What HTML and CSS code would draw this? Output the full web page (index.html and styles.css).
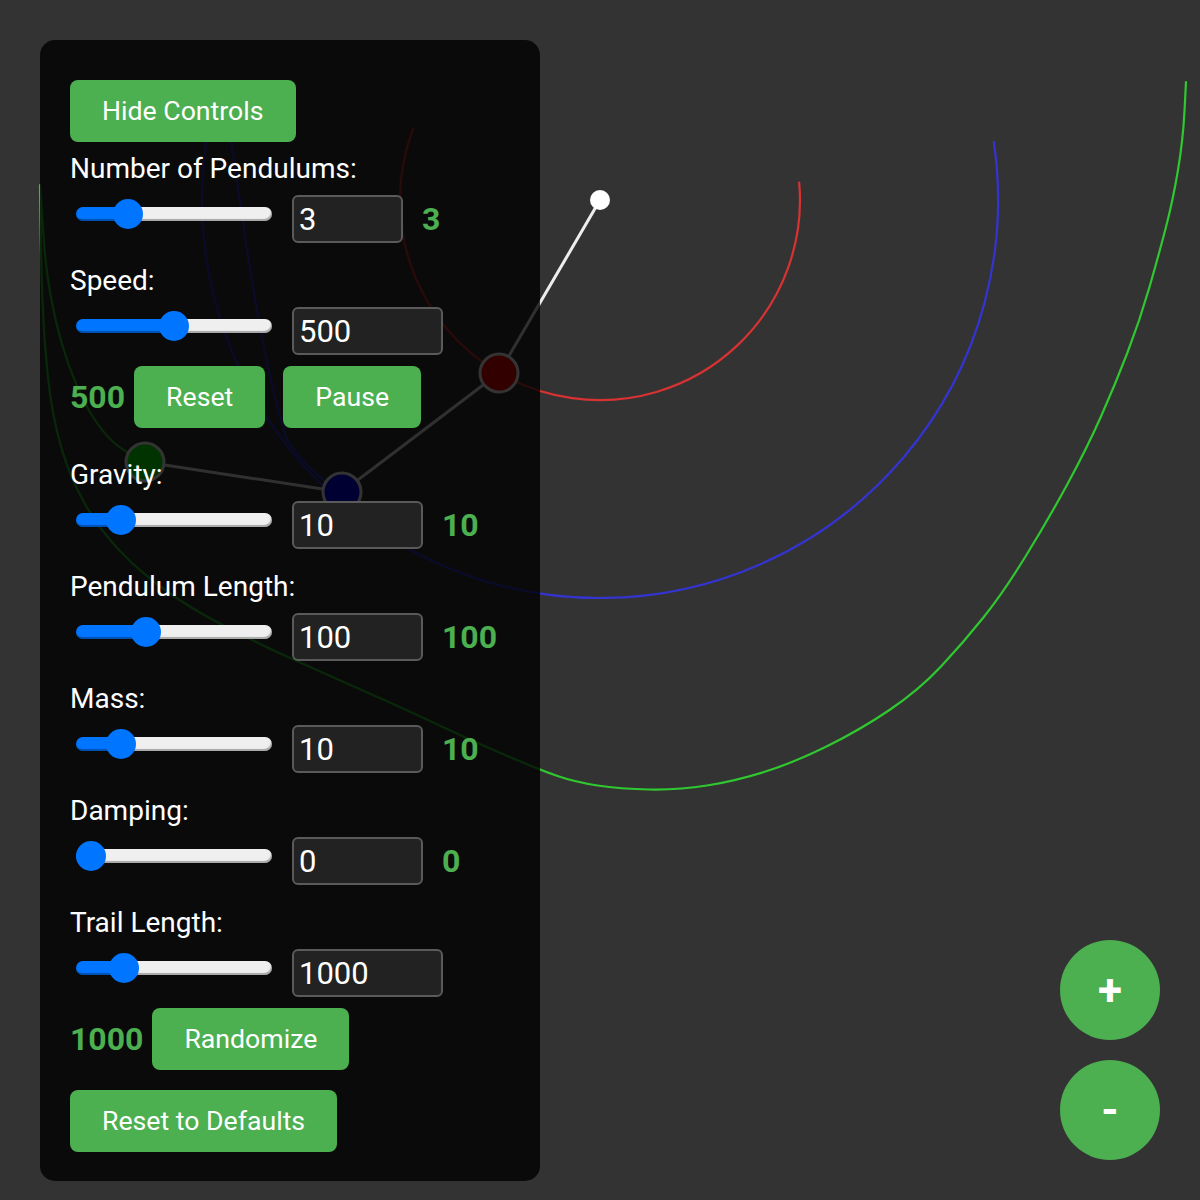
FILE: index.html
```html
<!DOCTYPE html>
<html lang="en">
<head>
  <meta charset="UTF-8">
  <title>Pendulum Simulator</title>
  <meta name="viewport" content="width=device-width, initial-scale=1.0">
  <link rel="stylesheet" href="styles.css">
</head>
<body>
  <svg class="scene" width="1200" height="1200" viewBox="0 0 1200 1200">
    <g class="trails">
      <path stroke="#d83232" d="M799.2,182.6 A200 200 0 1 1 413.3,128.3"/>
      <path stroke="#3434d2" d="M993.8,142 A398 398 0 1 1 205.2,150 C208,118 228,116 233,153 C248,260 262,360 287,440 C302,462 320,480 342,492"/>
      <path stroke="#30c830" d="M1186,82 L1184.5,111 Q1183,140 1178,170 Q1173,200 1166,227 Q1159,254 1149.5,287 Q1140,320 1127.5,352.5 Q1115,385 1101,416.5 Q1087,448 1067.5,484 Q1048,520 1025.5,556.5 Q1003,593 983,618 Q963,643 941,666.5 Q919,690 889.5,710 Q860,730 826.5,746.5 Q793,763 764,772 Q735,781 707,785.5 Q679,790 649.5,789.5 Q620,789 597.5,785.5 Q575,782 557.5,776 Q540,770 505,755 Q470,740 438.5,725 Q407,710 368.5,693 Q330,676 293.5,659.5 Q257,643 223.5,625.5 Q190,608 165,590 Q140,572 120,551 Q100,530 85,504 Q70,478 61,446.5 Q52,415 48,377.5 Q44,340 42.5,300 Q41,260 40.5,222.5 L40,185 Q42,215 44,242.5 Q46,270 50.5,295 Q55,320 61.5,342.5 Q68,365 76.5,385 Q85,405 95,420 Q105,435 115,443.5 Q125,452 145,462"/>
    </g>
    <g class="rods">
      <line x1="600" y1="200" x2="499" y2="373"/>
      <line x1="499" y1="373" x2="342" y2="492"/>
      <line x1="342" y1="492" x2="145" y2="462"/>
    </g>
    <circle class="pivot" cx="600" cy="200" r="10"/>
    <circle class="bob" cx="499" cy="373" r="19" fill="#f00"/>
    <circle class="bob" cx="342" cy="492" r="19" fill="#00f"/>
    <circle class="bob" cx="145" cy="462" r="19" fill="#0f0"/>
  </svg>

  <div class="controls">
    <button class="btn toggle">Hide Controls</button>

    <div class="control">
      <label for="count">Number of Pendulums:</label>
      <div class="row">
        <input class="slider" type="range" min="1" max="10" value="3" style="--p: 26.5%">
        <input class="num short" id="count" type="number" value="3">
        <span class="value">3</span>
      </div>
    </div>

    <div class="control with-actions">
      <label for="speed">Speed:</label>
      <div class="row">
        <input class="slider" type="range" min="1" max="1000" value="500" style="--p: 50%">
        <input class="num long" id="speed" type="number" value="500">
        <span class="value">500</span>
        <button class="btn">Reset</button>
        <button class="btn">Pause</button>
      </div>
    </div>

    <div class="control">
      <label for="gravity">Gravity:</label>
      <div class="row">
        <input class="slider" type="range" min="1" max="50" value="10" style="--p: 23.2%">
        <input class="num" id="gravity" type="number" value="10">
        <span class="value">10</span>
      </div>
    </div>

    <div class="control">
      <label for="length">Pendulum Length:</label>
      <div class="row">
        <input class="slider" type="range" min="50" max="200" value="100" style="--p: 35.9%">
        <input class="num" id="length" type="number" value="100">
        <span class="value">100</span>
      </div>
    </div>

    <div class="control">
      <label for="mass">Mass:</label>
      <div class="row">
        <input class="slider" type="range" min="1" max="50" value="10" style="--p: 23.2%">
        <input class="num" id="mass" type="number" value="10">
        <span class="value">10</span>
      </div>
    </div>

    <div class="control">
      <label for="damping">Damping:</label>
      <div class="row">
        <input class="slider" type="range" min="0" max="1" step="0.01" value="0" style="--p: 7.7%">
        <input class="num" id="damping" type="number" value="0">
        <span class="value">0</span>
      </div>
    </div>

    <div class="control last">
      <label for="trail">Trail Length:</label>
      <div class="row">
        <input class="slider" type="range" min="0" max="5000" value="1000" style="--p: 24.6%">
        <input class="num long" id="trail" type="number" value="1000">
        <span class="value">1000</span>
        <button class="btn">Randomize</button>
      </div>
    </div>

    <button class="btn">Reset to Defaults</button>
  </div>

  <div class="zoom">
    <button>+</button>
    <button>-</button>
  </div>
</body>
</html>
```

FILE: styles.css
```css
html, body { height: 100%; }
body { margin: 0; background: #333; color: #fff; font-family: Roboto, "Noto Sans", Arial, sans-serif; overflow: hidden; }

.scene { position: absolute; top: 0; left: 0; }
.trails path { fill: none; stroke-width: 2.2; stroke-linejoin: round; stroke-linecap: round; }
.rods line { stroke: #eee; stroke-width: 3; }
.pivot { fill: #fff; }
.bob { stroke: #fff; stroke-width: 3; }

.controls { position: absolute; top: 40px; left: 40px; width: 500px; box-sizing: border-box; padding: 40px 30px 29px; background: rgba(0, 0, 0, .8); border-radius: 15px; }

.btn { height: 62px; padding: 0 32px; border: 0; border-radius: 8px; background: #4caf50; color: #fff; font: 26.67px Roboto, sans-serif; }
.toggle { display: block; margin-bottom: 12px; }

.control { margin-bottom: 23px; }
.control.with-actions { margin-bottom: 32px; }
.control.last { margin-bottom: 20px; }
.control label { display: block; font-size: 28px; line-height: 30px; }

.row { display: flex; flex-wrap: wrap; align-items: center; row-gap: 11px; margin-top: 11px; }
.row .btn { margin: 0 9px; }

.slider { -webkit-appearance: none; appearance: none; width: 196px; height: 30px; margin: 0 20px 10px 6px; padding: 0; background: transparent; }
.slider::-webkit-slider-runnable-track { height: 14px; border-radius: 7px; background: linear-gradient(to right, #0075ff var(--p), #efefef var(--p)); box-shadow: inset -1px -2px 1px rgba(0, 0, 0, .3); }
.slider::-webkit-slider-thumb { -webkit-appearance: none; width: 30px; height: 30px; margin-top: -8px; border: 0; border-radius: 50%; background: #0075ff; }

.num { width: 131px; height: 48px; box-sizing: border-box; margin: 0 19px 0 0; padding: 0 5px; border: 2px solid #5a5a5a; border-radius: 6px; background: #222; color: #fff; font: 31px Roboto, sans-serif; }
.num.short { width: 111px; }
.num.long { width: 151px; }
.num::-webkit-inner-spin-button { -webkit-appearance: none; }

.value { color: #4caf50; font-size: 32px; font-weight: bold; }

.zoom { position: absolute; right: 40px; bottom: 40px; display: flex; flex-direction: column; gap: 20px; }
.zoom button { width: 100px; height: 100px; padding: 0; border: 0; border-radius: 50%; background: #4caf50; color: #fff; font: bold 44px Roboto, sans-serif; }
```
